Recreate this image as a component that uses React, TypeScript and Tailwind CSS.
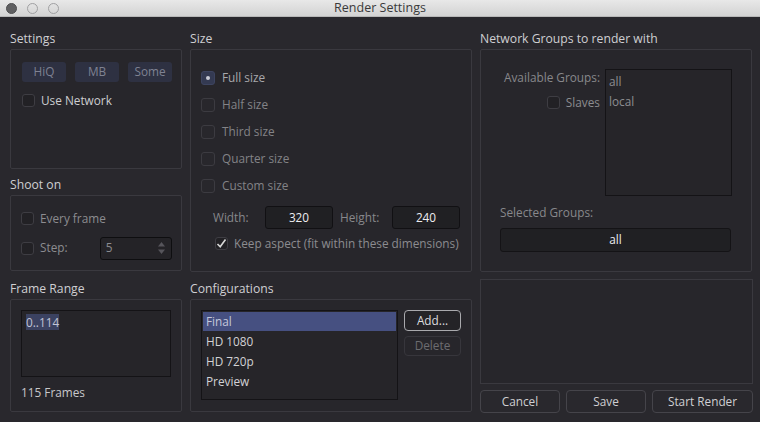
import React from 'react';

// Render Settings ダイアログ
const font = { fontFamily: '"Open Sans", "Liberation Sans", sans-serif' };

function Box({ label, className, children }: { label: string; className: string; children?: React.ReactNode }) {
  return (
    <div className="flex flex-col">
      <div className="h-5 flex items-center text-[12.2px] text-[#cfcfd2] leading-none -mt-[1px]">{label}</div>
      <div className={`border border-[#3a393f] rounded-[2px] bg-[#27262b] ${className}`}>{children}</div>
    </div>
  );
}

function Check({ checked = false, label, dim = true }: { checked?: boolean; label: string; dim?: boolean }) {
  return (
    <div className="flex items-center gap-[6px]">
      <div className="w-[13px] h-[13px] rounded-[3px] border border-[#3e3d43] bg-[#222125] flex items-center justify-center">
        {checked && (
          <svg width="11" height="11" viewBox="0 0 11 11">
            <path d="M1.5 6 L4.2 8.8 L9.5 1.5" fill="none" stroke="#d8d8d8" strokeWidth="1.6" />
          </svg>
        )}
      </div>
      <span className={dim ? 'text-[#8c8c90]' : 'text-[#cdcdd0]'}>{label}</span>
    </div>
  );
}

function Radio({ label, selected = false }: { label: string; selected?: boolean }) {
  return (
    <div className="flex items-center gap-[7px] h-[27px]">
      <div
        className={`w-[14px] h-[14px] rounded-[3px] border flex items-center justify-center ${
          selected ? 'bg-[#343a52] border-[#3d4460]' : 'bg-[#28272c] border-[#3c3b41]'
        }`}
      >
        {selected && <div className="w-[4px] h-[4px] rounded-full bg-[#c9cbd6]" />}
      </div>
      <span className={selected ? 'text-[#a8a8ac]' : 'text-[#838387]'}>{label}</span>
    </div>
  );
}

export default function App() {
  return (
    <div style={font} className="w-[760px] h-[422px] bg-[#29282d] text-[11.8px] whitespace-nowrap overflow-hidden flex flex-col">
      {/* タイトルバー */}
      <div className="h-[17px] bg-gradient-to-b from-[#e8e8e8] to-[#d3d3d3] border-b border-[#b8b8b8] flex items-center relative">
        <div className="flex gap-[10px] pl-[6px]">
          <div className="w-[11px] h-[11px] rounded-full bg-[#5f5f61] border border-[#4f4f51]" />
          <div className="w-[11px] h-[11px] rounded-full border border-[#a0a0a2]" />
          <div className="w-[11px] h-[11px] rounded-full border border-[#a0a0a2]" />
        </div>
        <div className="absolute inset-0 flex items-center justify-center text-[12.5px] leading-none text-[#3a3a3a]">Render Settings</div>
      </div>

      <div className="flex gap-2 pl-[10px] pt-[13px]">
        {/* 左カラム */}
        <div className="w-[172px] flex flex-col">
          <Box label="Settings" className="h-[120px] pt-[12px] pl-[11px]">
            <div className="flex gap-[9px]">
              {['HiQ', 'MB', 'Some'].map((b) => (
                <div key={b} className="w-[44px] h-[20px] rounded-[3px] bg-[#2e3142] flex items-center justify-center text-[#7f8292]">
                  {b}
                </div>
              ))}
            </div>
            <div className="mt-[10px]">
              <Check label="Use Network" dim={false} />
            </div>
          </Box>
          <div className="mt-[7px]">
            <Box label="Shoot on" className="h-[76px] pl-[10px] pt-[14px]">
              <Check label="Every frame" />
              <div className="flex items-center mt-[9px]">
                <Check label="Step:" />
                <div className="ml-[32px] w-[72px] h-[23px] rounded-[3px] border border-[#0e0e10] bg-[#242327] flex items-center justify-between px-[5px]">
                  <span className="text-[#8c8c90]">5</span>
                  <svg width="9" height="14" viewBox="0 0 9 14">
                    <path d="M4.5 1 L8 5.5 L1 5.5 Z" fill="#56555b" />
                    <path d="M4.5 13 L8 8.5 L1 8.5 Z" fill="#56555b" />
                  </svg>
                </div>
              </div>
            </Box>
          </div>
        </div>

        {/* 中央カラム */}
        <div className="w-[282px]">
          <Box label="Size" className="h-[223px] pl-[10px] pt-[14px]">
            <Radio label="Full size" selected />
            <Radio label="Half size" />
            <Radio label="Third size" />
            <Radio label="Quarter size" />
            <Radio label="Custom size" />
            <div className="flex items-center mt-[7px] pl-[12px] text-[#88888c]">
              <span className="w-[52px]">Width:</span>
              <div className="w-[68px] h-[23px] rounded-[3px] border border-[#111013] bg-[#202023] flex items-center justify-center text-[#ededf0]">320</div>
              <span className="ml-[7px] w-[52px]">Height:</span>
              <div className="w-[68px] h-[23px] rounded-[3px] border border-[#111013] bg-[#202023] flex items-center justify-center text-[#ededf0]">240</div>
            </div>
            <div className="mt-[6px] pl-[14px]">
              <Check checked label="Keep aspect (fit within these dimensions)" />
            </div>
          </Box>
        </div>

        {/* 右カラム */}
        <div className="w-[272px]">
          <Box label="Network Groups to render with" className="h-[223px] pt-[19px] pl-[19px]">
            <div className="flex">
              <div className="w-[105px] flex flex-col items-end pr-[5px] text-[#88888c]">
                <span className="leading-none mt-[3px]">Available Groups:</span>
                <div className="mt-[10px]">
                  <Check label="Slaves" />
                </div>
              </div>
              <div className="w-[127px] h-[127px] border border-[#141316] bg-[#262529] pl-[3px] pt-[1px] text-[#8d8d91]">
                <div className="leading-[20px]">all</div>
                <div className="leading-[20px]">local</div>
              </div>
            </div>
            <div className="mt-[8px] text-[#88888c]">Selected Groups:</div>
            <div className="mt-[6px] w-[231px] h-[24px] rounded-[3px] border border-[#141316] bg-[#202023] flex items-center justify-center text-[#ededf0]">all</div>
          </Box>
        </div>
      </div>

      <div className="flex gap-2 pl-[10px] pt-[8px]">
        <div className="w-[172px]">
          <Box label="Frame Range" className="h-[113px] pt-[10px] pl-[10px]">
            <div className="w-[150px] h-[67px] border border-[#141316] bg-[#262529] pl-[4px] pt-[3px]">
              <span className="bg-[#3b4261] text-[#c0c4d6]">0..114</span>
            </div>
            <div className="mt-[7px] text-[#c8c8cb]">115 Frames</div>
          </Box>
        </div>
        <div className="w-[282px]">
          <Box label="Configurations" className="h-[113px] pt-[10px] pl-[10px] flex gap-[6px]">
            <div className="w-[197px] h-[90px] border border-[#141316] bg-[#262529] p-[1px] text-[#d2d2d5]">
              <div className="h-[19px] bg-[#465081] pl-[3px] leading-[19px] text-[#c4c8dc]">Final</div>
              <div className="h-[20px] pl-[3px] leading-[20px]">HD 1080</div>
              <div className="h-[20px] pl-[3px] leading-[20px]">HD 720p</div>
              <div className="h-[20px] pl-[3px] leading-[20px]">Preview</div>
            </div>
            <div className="flex flex-col gap-[5px]">
              <div className="w-[57px] h-[21px] rounded-[4px] border border-[#a9a9ad] bg-[#242327] flex items-center justify-center text-[#dcdcdf]">Add...</div>
              <div className="w-[57px] h-[20px] rounded-[4px] border border-[#37363c] flex items-center justify-center text-[#6c6c70]">Delete</div>
            </div>
          </Box>
        </div>
        <div className="w-[273px] flex flex-col">
          <div className="h-[105px] border border-[#3a393f] bg-[#27262b] -mt-[1px]" />
          <div className="flex gap-[6px] mt-[6px]">
            {[
              ['Cancel', 'w-[80px]'],
              ['Save', 'w-[80px]'],
              ['Start Render', 'w-[101px]'],
            ].map(([t, w]) => (
              <div key={t} className={`${w} h-[23px] rounded-[4px] border border-[#45444a] flex items-center justify-center text-[#cfcfd2]`}>
                {t}
              </div>
            ))}
          </div>
        </div>
      </div>
    </div>
  );
}
